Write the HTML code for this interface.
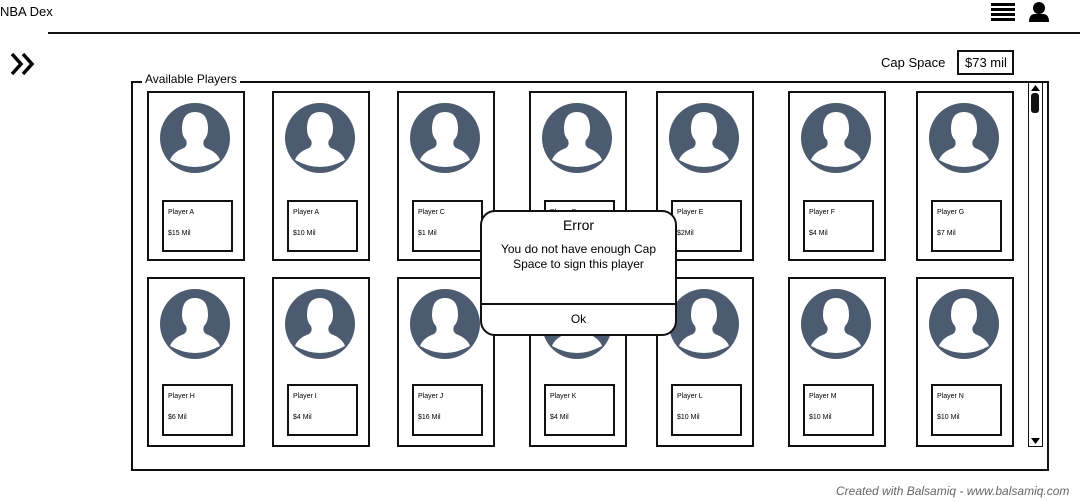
<!DOCTYPE html>
<html><head><meta charset="utf-8"><style>
*{margin:0;padding:0;box-sizing:border-box}
body{width:1080px;height:502px;background:#fff;position:relative;overflow:hidden;font-family:"Liberation Sans",sans-serif;color:#000}
.a{position:absolute}
.card{position:absolute;width:98px;border:2px solid #111;background:#fff}
.card svg{position:absolute;left:10px;top:9px}
.info{position:absolute;left:13px;width:71px;height:52px;border:2px solid #111;font-size:7px;padding:0 0 0 4px;line-height:21px}
</style></head><body>
<div class="a" style="left:0;top:4px;font-size:13px">NBA Dex</div>
<div class="a" style="left:48px;top:32px;width:1032px;height:2px;background:#111"></div>
<svg class="a" style="left:991px;top:2px" width="25" height="20"><g fill="#000"><rect x="0" y="1" width="24" height="3"/><rect x="0" y="6" width="24" height="3"/><rect x="0" y="11" width="24" height="3"/><rect x="0" y="16" width="24" height="3"/></g></svg>
<svg class="a" style="left:1029px;top:1px" width="22" height="22"><circle cx="10" cy="7" r="6" fill="#000"/><path d="M0 21 Q0 13 6 13 L14 13 Q20 13 20 21Z" fill="#000"/></svg>
<svg class="a" style="left:10px;top:52px" width="28" height="26"><path d="M2 2 L11 12 L2 22 M13 2 L22 12 L13 22" stroke="#000" stroke-width="3.5" fill="none"/></svg>
<div class="a" style="left:881px;top:55px;font-size:13px">Cap Space</div>
<div class="a" style="left:957px;top:50px;width:57px;height:25px;border:2px solid #111;font-size:13px;padding:3px 0 0 6px">$73 mil</div>
<div class="a" style="left:131px;top:81px;width:918px;height:390px;border:2px solid #111"></div>
<div class="a" style="left:142px;top:72px;background:#fff;font-size:12px;padding:0 3px">Available Players</div>
<div class="a" style="left:1028px;top:82px;width:15px;height:365px;border:1px solid #111;background:#fff"></div>
<div class="a" style="left:1031px;top:93px;width:8px;height:20px;background:#111;border-radius:3px"></div>
<svg class="a" style="left:1030px;top:84px" width="11" height="8"><path d="M1 7 L5.5 1 L10 7Z"/></svg>
<svg class="a" style="left:1030px;top:437px" width="11" height="8"><path d="M1 1 L5.5 7 L10 1Z"/></svg>
<div id="g"></div>
<script>
const xs=[147,272,397,529,656,788,916];
const r1=[["Player A","$15 Mil"],["Player A","$10 Mil"],["Player C","$1 Mil"],["Player D","$3 Mil"],["Player E","$2Mil"],["Player F","$4 Mil"],["Player G","$7 Mil"]];
const r2=[["Player H","$6 Mil"],["Player I","$4 Mil"],["Player J","$16 Mil"],["Player K","$4 Mil"],["Player L","$10 Mil"],["Player M","$10 Mil"],["Player N","$10 Mil"]];
const av='<svg width="72" height="72"><circle cx="36" cy="36" r="35" fill="#4d5b70"/><g fill="#fff"><path d="M23 27 Q23 10 36 10 Q49 10 49 27 Q49 34 45 38 Q43 43 47 46 Q58 50 61 58 Q48 65 36 65 Q24 65 11 58 Q14 50 25 46 Q29 43 27 38 Q23 34 23 27Z"/></g></svg>';
let h='';
[[91,170,r1,107],[277,170,r2,105]].forEach(([y,hh,r,iy])=>{xs.forEach((x,i)=>{h+=`<div class="card" style="left:${x}px;top:${y}px;height:${hh}px">${av}<div class="info" style="top:${iy}px">${r[i][0]}<br>${r[i][1]}</div></div>`})});
document.getElementById('g').innerHTML=h;
</script>
<div class="a" style="left:480px;top:210px;width:197px;height:126px;border:2px solid #111;border-radius:15px;background:#fff;text-align:center;font-size:12px">
<div style="font-size:14px;margin-top:5px">Error</div>
<div style="margin-top:9px;line-height:15px">You do not have enough Cap<br>Space to sign this player</div>
<div style="position:absolute;left:0;right:0;top:91px;border-top:2px solid #111"></div>
<div style="position:absolute;left:0;right:0;top:100px">Ok</div>
</div>
<div class="a" style="left:836px;top:484px;font-size:12px;font-style:italic;color:#666">Created with Balsamiq - www.balsamiq.com</div>
</body></html>
